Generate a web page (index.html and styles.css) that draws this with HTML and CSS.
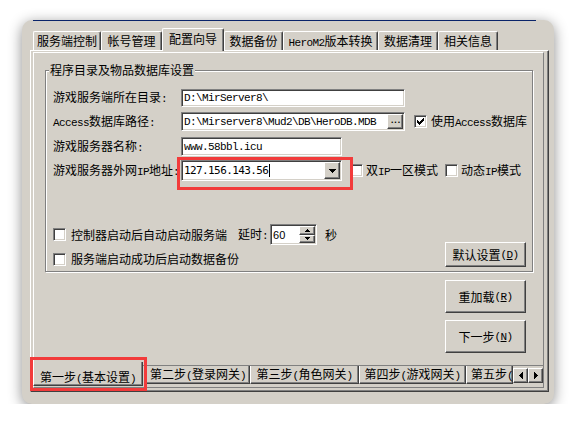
FILE: index.html
```html
<!DOCTYPE html>
<html lang="zh-CN">
<head>
<meta charset="utf-8">
<title>配置向导</title>
<link rel="stylesheet" href="styles.css">
</head>
<body>
<div class="window">
  <div class="titleline"></div>
  <div class="tabstrip">
    <div class="tab t1">服务端控制</div>
    <div class="tab t2">帐号管理</div>
    <div class="tab t3 sel">配置向导</div>
    <div class="tab t4">数据备份</div>
    <div class="tab t5"><span class="m">HeroM2</span>版本转换</div>
    <div class="tab t6">数据清理</div>
    <div class="tab t7">相关信息</div>
  </div>
  <div class="tabpage">
    <div class="inner">
      <div class="page">
        <div class="group">
          <div class="caption">程序目录及物品数据库设置</div>
          <div class="row r1">
            <span class="lbl">游戏服务端所在目录<span class="m">:</span></span>
            <div class="edit w-long"><span class="m">D:\MirServer8\</span></div>
          </div>
          <div class="row r2">
            <span class="lbl"><span class="m">Access</span>数据库路径<span class="m">:</span></span>
            <div class="edit w-long"><span class="m">D:\Mirserver8\Mud2\DB\HeroDB.MDB</span><span class="dots">...</span></div>
            <span class="cb cb-a"><svg width="7" height="7" viewBox="0 0 7 7"><path d="M0 2h1v3H0zM1 3h1v3H1zM2 4h1v3H2zM3 3h1v3H3zM4 2h1v3H4zM5 1h1v3H5zM6 0h1v3H6z" fill="#000"/></svg></span>
            <span class="cbl">使用<span class="m">Access</span>数据库</span>
          </div>
          <div class="row r3">
            <span class="lbl">游戏服务器名称<span class="m">:</span></span>
            <div class="edit w-mid"><span class="m">www.58bbl.icu</span></div>
          </div>
          <div class="row r4">
            <span class="lbl">游戏服务器外网<span class="m">IP</span>地址<span class="m">:</span></span>
            <div class="edit w-mid combo"><span class="ip">127.156.143.56</span><span class="caret"></span><span class="ddbtn"><svg width="7" height="4" viewBox="0 0 7 4"><path d="M0 0h7v1H6v1H5v1H4v1H3V3H2V2H1V1H0z" fill="#000"/></svg></span></div>
            <span class="cb cb-b"></span><span class="cbl l3">双<span class="m">IP</span>一区模式</span>
            <span class="cb cb-c"></span><span class="cbl l3">动态<span class="m">IP</span>模式</span>
          </div>
          <div class="bottom">
            <div class="opts">
              <div class="row o1">
                <span class="cb"></span><span class="cbl l5">控制器启动后自动启动服务端</span>
                <span class="delay">延时<span class="m">:</span></span>
                <div class="spin">
                  <span class="num">60</span>
                  <span class="spinbtns">
                    <span class="sb"><svg width="5" height="3" viewBox="0 0 5 3"><path d="M2 0h1v1h1v1h1v1H0V2h1V1h1z" fill="#000"/></svg></span>
                    <span class="sb"><svg width="5" height="3" viewBox="0 0 5 3"><path d="M0 0h5v1H4v1H3v1H2V2H1V1H0z" fill="#000"/></svg></span>
                  </span>
                </div>
                <span class="sec">秒</span>
              </div>
              <div class="row o2">
                <span class="cb"></span><span class="cbl l5">服务端启动成功后启动数据备份</span>
              </div>
            </div>
            <div class="btn b-def">默认设置<span class="m">(<u>D</u>)</span></div>
          </div>
        </div>
        <div class="btn big">重加载<span class="m">(<u>R</u>)</span></div>
        <div class="btn big b2">下一步<span class="m">(<u>N</u>)</span></div>
      </div>
      <div class="btabs">
        <div class="btab bsel">第一步<span class="m">(</span>基本设置<span class="m">)</span></div>
        <div class="btab bt2">第二步<span class="m">(</span>登录网关<span class="m">)</span></div>
        <div class="btab bt3">第三步<span class="m">(</span>角色网关<span class="m">)</span></div>
        <div class="btab bt4">第四步<span class="m">(</span>游戏网关<span class="m">)</span></div>
        <div class="btab bt5">第五步<span class="m">(</span></div>
        <div class="arrow"><svg width="4" height="7" viewBox="0 0 4 7"><path d="M3 0h1v7H3V6H2V5H1V4H0V3h1V2h1V1h1z" fill="#000"/></svg></div>
        <div class="arrow"><svg width="4" height="7" viewBox="0 0 4 7"><path d="M0 0h1v1h1v1h1v1h1v1H3v1H2v1H1v1H0z" fill="#000"/></svg></div>
      </div>
    </div>
  </div>
  <div class="mark mark1"></div>
  <div class="mark mark2"></div>
</div>
</body>
</html>
```
FILE: styles.css
```css
* { box-sizing: border-box; }
html, body { margin: 0; background: #fff; }
body {
  font-family: "Noto Sans CJK SC", "Noto Sans CJK JP", sans-serif;
  font-size: 12px;
  line-height: 14px;
  color: #000;
}
.m {
  font-family: "Liberation Mono", monospace;
  font-size: 11px;
  letter-spacing: -0.6px;
}

.window {
  position: relative;
  margin: 20px 0 0 22px;
  width: 532px;
  height: 384px;
  background: #d4d0c8;
  border-radius: 10px;
  box-shadow: 0 3px 14px rgba(0, 0, 0, .45);
}
.titleline { height: 1px; margin: 0 18px 0 11px; background: #0a246a; }

.tabstrip {
  display: flex;
  align-items: flex-end;
  height: 22px;
  margin-top: 7px;
  padding-left: 11px;
}
.tab {
  height: 19px;
  border: 1px solid #fff;
  border-bottom: 0;
  border-right-color: #404040;
  box-shadow: inset -1px 0 #808080;
  border-radius: 2px 2px 0 0;
  text-align: center;
  line-height: 18px;
  white-space: nowrap;
}
.tab.sel {
  height: 23px;
  margin-bottom: -1px;
  line-height: 20px;
  position: relative;
  background: #d4d0c8;
}
.t1 { width: 68px; } .t2 { width: 61px; } .t3 { width: 62px; } .t4 { width: 59px; }
.t5 { width: 95px; } .t6 { width: 60px; } .t7 { width: 60px; }

.tabpage {
  margin-left: 8px;
  width: 519px;
  height: 342px;
  border: 1px solid;
  border-color: #fff #404040 #404040 #fff;
  box-shadow: inset -1px -1px #808080;
  padding: 1px 4px 3px 2px;
}
.inner {
  height: 336px;
  display: flex;
  flex-direction: column;
  border: 1px solid;
  border-color: #fff #808080 #808080 #fff;
}
.page { flex: 1; min-height: 0; border-bottom: 1px solid #808080; }

.group {
  margin: 17px 10px 0 11px;
  border: 1px solid #808080;
  box-shadow: inset 1px 1px #fff, 1px 1px #fff;
  padding: 0 6px 4px 7px;
}
.caption {
  width: max-content;
  margin: -8px 0 0 -4px;
  padding: 0 1px;
  background: #d4d0c8;
}
.row { display: flex; align-items: center; }
.r1 { margin-top: 12px; height: 18px; }
.r2 { margin-top: 5px; height: 19px; }
.r3 { margin-top: 6px; height: 19px; }
.r4 { margin-top: 4px; height: 21px; }
.lbl { width: 128px; flex: none; white-space: nowrap; }

.edit {
  height: 100%;
  flex: none;
  display: flex;
  align-items: center;
  background: #fff;
  border: 1px solid;
  border-color: #808080 #fff #fff #808080;
  box-shadow: inset 1px 1px #404040, inset -1px -1px #d4d0c8;
  padding: 0 1px 0 2px;
  white-space: nowrap;
}
.w-long { width: 224px; }
.w-mid { width: 161px; }

.dots, .ddbtn, .sb, .arrow, .btn {
  background: #d4d0c8;
  border: 1px solid;
  border-color: #fff #404040 #404040 #fff;
  box-shadow: inset -1px -1px #808080;
}
.dots {
  margin-left: auto;
  width: 16px;
  height: 15px;
  font-family: "Liberation Mono", monospace;
  font-size: 9px;
  font-weight: bold;
  line-height: 13px;
  letter-spacing: -2px;
  text-indent: -1px;
  text-align: center;
}
.ddbtn {
  margin-left: auto;
  width: 16px;
  height: 17px;
  display: flex;
  align-items: center;
  justify-content: center;
}
.ip {
  font-family: "DejaVu Sans Mono", monospace;
  font-size: 11px;
  letter-spacing: -0.6px;
}
.caret { width: 1px; height: 13px; background: #000; margin-left: 1px; }

.cb {
  width: 13px;
  height: 13px;
  flex: none;
  display: flex;
  align-items: center;
  justify-content: center;
  background: #fff;
  border: 1px solid;
  border-color: #808080 #fff #fff #808080;
  box-shadow: inset 1px 1px #404040, inset -1px -1px #d4d0c8;
}
.cb-a { margin-left: 9px; }
.cb-b { margin-left: 8px; }
.cb-c { margin-left: 7px; }
.cbl { margin-left: 4px; white-space: nowrap; }
.l3 { margin-left: 3px; }
.l5 { margin-left: 5px; }

.bottom { display: flex; margin-top: 43px; }
.opts { flex: none; }
.o1 { height: 21px; }
.o2 { margin-top: 6px; height: 16px; }
.delay { margin-left: 11px; white-space: nowrap; }
.spin {
  margin-left: 2px;
  width: 47px;
  height: 21px;
  display: flex;
  align-items: center;
  background: #fff;
  border: 1px solid;
  border-color: #808080 #fff #fff #808080;
  box-shadow: inset 1px 1px #404040, inset -1px -1px #d4d0c8;
  padding: 0 1px 0 2px;
}
.num { font-family: "Liberation Sans", sans-serif; font-size: 11px; }
.spinbtns {
  margin-left: auto;
  width: 16px;
  height: 17px;
  display: flex;
  flex-direction: column;
}
.sb { flex: 1; display: flex; align-items: center; justify-content: center; }
.sec { margin-left: 8px; }

.btn {
  display: flex;
  align-items: center;
  justify-content: center;
  white-space: nowrap;
}
.b-def { margin-left: auto; align-self: flex-end; width: 81px; height: 25px; }
.big { width: 81px; height: 33px; margin: 8px 17px 0 auto; }
.b2 { margin-top: 7px; }

.btabs { height: 21px; display: flex; align-items: flex-start; }
.btab {
  height: 18px;
  flex: none;
  border-left: 1px solid #fff;
  border-right: 1px solid #404040;
  border-bottom: 1px solid #404040;
  box-shadow: inset -1px -1px #808080;
  text-align: center;
  white-space: nowrap;
  padding-top: 1px;
  overflow: hidden;
}
.bsel {
  width: 110px;
  height: 24px;
  margin: -4px 0 0 -1px;
  padding-top: 8px;
  position: relative;
  background: #d4d0c8;
}
.bt2 { width: 104px; margin-left: 3px; }
.bt3 { width: 109px; }
.bt4 { width: 107px; }
.bt5 { width: 47px; text-align: left; padding-left: 4px; }
.arrow {
  width: 15px;
  height: 15px;
  margin-top: 2px;
  flex: none;
  display: flex;
  align-items: center;
  justify-content: center;
}

.mark { position: absolute; border: 3px solid #f23b3b; }
.mark1 { left: 155px; top: 137px; width: 176px; height: 33px; }
.mark2 { left: 8px; top: 337px; width: 117px; height: 34px; }
```
